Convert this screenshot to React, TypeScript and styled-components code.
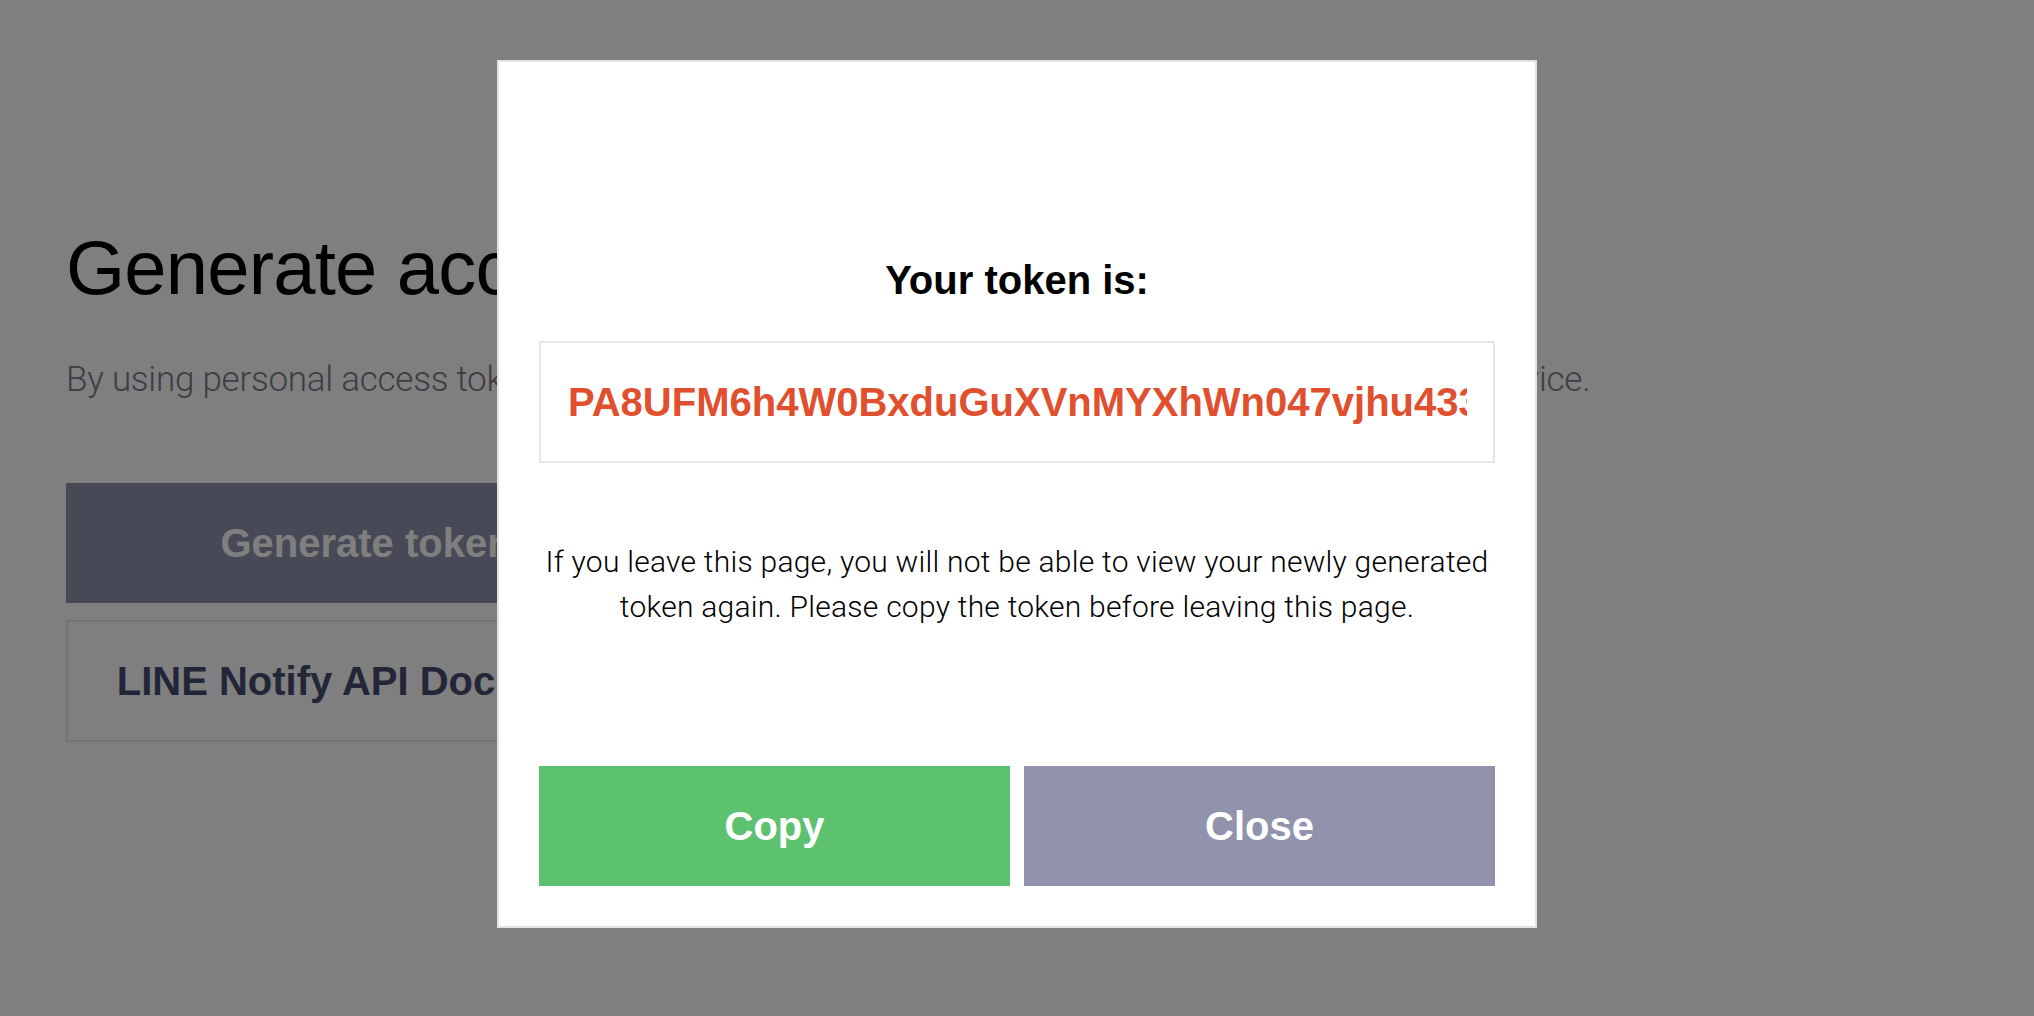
import React from 'react'
import styled, { createGlobalStyle } from 'styled-components'

const GlobalStyle = createGlobalStyle`
  html, body {
    margin: 0;
    padding: 0;
    background: #fff;
  }
  body {
    font-family: 'Liberation Sans', Arial, sans-serif;
  }
`

const Page = styled.div`
  padding: 222px 0 0 66px;
  height: 100vh;
  box-sizing: border-box;
`

const Heading = styled.h1`
  margin: 0;
  font-family: 'Liberation Sans', Arial, sans-serif;
  font-weight: 400;
  font-size: 76px;
  line-height: 92px;
  color: #000;
  letter-spacing: -0.8px;
`

const Lead = styled.p`
  margin: 39px 0 0;
  font-family: Roboto, 'Liberation Sans', sans-serif;
  font-weight: 300;
  font-size: 35px;
  line-height: 54px;
  letter-spacing: -0.25px;
  color: #7a7a8a;
`

const ButtonStack = styled.div`
  margin-top: 76px;
  width: 600px;
  display: flex;
  flex-direction: column;
  gap: 17px;
`

const PageButton = styled.button<{ $outline?: boolean }>`
  height: ${p => (p.$outline ? '122px' : '120px')};
  width: 100%;
  border: ${p => (p.$outline ? '2px solid #e6e6e6' : 'none')};
  background: ${p => (p.$outline ? '#fff' : '#8f93ae')};
  color: ${p => (p.$outline ? '#444c70' : '#fff')};
  font-family: 'Liberation Sans', Arial, sans-serif;
  font-weight: 700;
  font-size: 40px;
  padding: 0;
  cursor: pointer;
`

const Overlay = styled.div`
  position: fixed;
  inset: 0;
  background: rgba(0, 0, 0, 0.5);
  display: flex;
  justify-content: center;
  align-items: flex-start;
  padding-top: 60px;
`

const Modal = styled.div`
  width: 1040px;
  box-sizing: border-box;
  background: #fff;
  border: 2px solid #e2e2e2;
  padding: 40px;
  display: flex;
  flex-direction: column;
`

const Title = styled.h2`
  margin: 153px 0 0;
  text-align: center;
  font-family: 'Liberation Sans', Arial, sans-serif;
  font-weight: 700;
  font-size: 40px;
  line-height: 50px;
  color: #000;
`

const TokenField = styled.input`
  margin-top: 36px;
  height: 122px;
  box-sizing: border-box;
  width: 100%;
  border: 2px solid #e6e6e6;
  padding: 0 26px 0 27px;
  outline: none;
  background: #fff;
  font-family: 'Liberation Sans', Arial, sans-serif;
  font-weight: 700;
  font-size: 40px;
  color: #e0502f;
`

const Notice = styled.p`
  margin: 76px 0 0;
  text-align: center;
  font-family: Roboto, 'Liberation Sans', sans-serif;
  font-weight: 300;
  font-size: 30px;
  line-height: 45px;
  letter-spacing: 0.25px;
  color: #000;
`

const Actions = styled.div`
  margin-top: 137px;
  display: grid;
  grid-template-columns: 1fr 1fr;
  gap: 14px;
`

const ActionButton = styled.button<{ $tone: 'green' | 'gray' }>`
  height: 120px;
  border: none;
  padding: 0;
  background: ${p => (p.$tone === 'green' ? '#5dc270' : '#9193ac')};
  color: #fff;
  font-family: 'Liberation Sans', Arial, sans-serif;
  font-weight: 700;
  font-size: 40px;
  cursor: pointer;
`

const TOKEN = 'PA8UFM6h4W0BxduGuXVnMYXhWn047vjhu433kQb2Tz9'

const App: React.FC = () => {
  return (
    <>
      <GlobalStyle />
      <Page>
        <Heading>Generate access token</Heading>
        <Lead>
          By using personal access tokens, you can configure notifications without having to add a web service.
        </Lead>
        <ButtonStack>
          <PageButton>Generate token</PageButton>
          <PageButton $outline>LINE Notify API Document</PageButton>
        </ButtonStack>
      </Page>
      <Overlay>
        <Modal>
          <Title>Your token is:</Title>
          <TokenField readOnly value={TOKEN} />
          <Notice>
            If you leave this page, you will not be able to view your newly generated token again. Please copy the
            token before leaving this page.
          </Notice>
          <Actions>
            <ActionButton $tone="green">Copy</ActionButton>
            <ActionButton $tone="gray">Close</ActionButton>
          </Actions>
        </Modal>
      </Overlay>
    </>
  )
}

export default App
